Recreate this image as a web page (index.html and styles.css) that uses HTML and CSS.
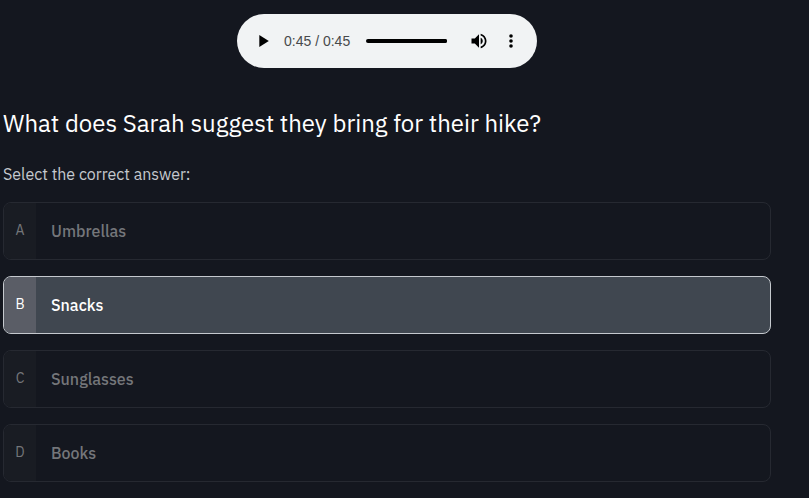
FILE: index.html
```html
<!DOCTYPE html>
<html lang="en">
<head>
<meta charset="utf-8">
<meta name="viewport" content="width=device-width, initial-scale=1">
<title>Listening question</title>
<link rel="stylesheet" href="styles.css">
</head>
<body>
<main class="quiz">
  <div class="player">
    <button class="icon-button" type="button" aria-label="Play">
      <svg class="icon" viewBox="0 0 20 20"><path d="M6.300 4v12l9.500-6z"/></svg>
    </button>
    <span class="time">0:45 / 0:45</span>
    <input class="timeline" type="range" min="0" max="45" value="45" aria-label="Audio position">
    <button class="icon-button" type="button" aria-label="Mute">
      <svg class="icon" viewBox="0 0 24 24"><path d="M3 9v6h4l5 5V4L7 9H3zm13.500 3c0-1.770-1.020-3.290-2.500-4.030v8.050c1.480-.73 2.500-2.250 2.500-4.020zM14 3.230v2.060c2.890.86 5 3.540 5 6.710s-2.110 5.850-5 6.710v2.060c4.010-.91 7-4.490 7-8.770s-2.990-7.860-7-8.770z"/></svg>
    </button>
    <button class="icon-button" type="button" aria-label="More options">
      <svg class="icon" viewBox="0 0 20 20"><circle cx="10" cy="5" r="1.800"/><circle cx="10" cy="10" r="1.800"/><circle cx="10" cy="15" r="1.800"/></svg>
    </button>
  </div>
  <h1 class="question">What does Sarah suggest they bring for their hike?</h1>
  <fieldset class="answers">
    <legend class="prompt">Select the correct answer:</legend>
    <label class="answer">
      <input class="choice" type="radio" name="answer" value="A">
      <span class="letter">A</span>
      <span class="answer-text">Umbrellas</span>
    </label>
    <label class="answer">
      <input class="choice" type="radio" name="answer" value="B" checked>
      <span class="letter">B</span>
      <span class="answer-text">Snacks</span>
    </label>
    <label class="answer">
      <input class="choice" type="radio" name="answer" value="C">
      <span class="letter">C</span>
      <span class="answer-text">Sunglasses</span>
    </label>
    <label class="answer">
      <input class="choice" type="radio" name="answer" value="D">
      <span class="letter">D</span>
      <span class="answer-text">Books</span>
    </label>
  </fieldset>
</main>
</body>
</html>
```
FILE: styles.css
```css
* {
  box-sizing: border-box;
}

body {
  margin: 0;
  background: #14171f;
  color: #fff;
  font-family: "IBM Plex Sans", Roboto, "Liberation Sans", sans-serif;
  font-size: 16px;
  line-height: 24px;
}

.quiz {
  margin: 0 38px 0 3px;
  padding: 14px 0 16px;
}

.player {
  display: flex;
  align-items: center;
  width: 300px;
  height: 54px;
  margin: 0 auto;
  padding: 0 10px;
  border-radius: 27px;
  background: #f1f3f4;
  color: #000;
}

.icon-button {
  display: flex;
  flex: none;
  align-items: center;
  justify-content: center;
  width: 32px;
  height: 32px;
  padding: 0;
  border: 0;
  background: none;
  color: inherit;
}

.icon {
  width: 20px;
  height: 20px;
  fill: currentColor;
}

.time {
  margin: 0 16px 0 5px;
  color: #484a4b;
  font-family: "Liberation Sans", Arial, sans-serif;
  font-size: 14px;
  white-space: nowrap;
}

.timeline {
  flex: 1;
  min-width: 0;
  height: 4px;
  margin: 0 16px 0 0;
  border-radius: 2px;
  background: #000;
  appearance: none;
}

.timeline::-webkit-slider-thumb {
  width: 4px;
  height: 4px;
  border-radius: 2px;
  background: #000;
  appearance: none;
}

.question {
  margin: 39px 0 0;
  font-size: 24px;
  font-weight: 400;
  line-height: 32px;
}

.answers {
  display: flex;
  flex-direction: column;
  min-width: 0;
  margin: 23px 0 0;
  padding: 0;
  border: 0;
  gap: 16px;
}

.prompt {
  margin-bottom: 16px;
  padding: 0;
  color: #c5c9ce;
}

.answer {
  position: relative;
  display: flex;
  height: 58px;
  overflow: hidden;
  border: 1px solid #262931;
  border-radius: 8px;
  color: #74767a;
}

.choice {
  position: absolute;
  opacity: 0;
}

.letter {
  display: flex;
  align-items: center;
  justify-content: center;
  width: 32px;
  padding-bottom: 2px;
  background: #191c23;
  font-size: 14px;
}

.answer-text {
  padding: 16px 15px;
  font-weight: 500;
}

.answer:has(.choice:checked) {
  border-color: #c5c9ce;
  background: #404750;
  color: #fff;
}

.choice:checked + .letter {
  background: #5a5d66;
}
```
